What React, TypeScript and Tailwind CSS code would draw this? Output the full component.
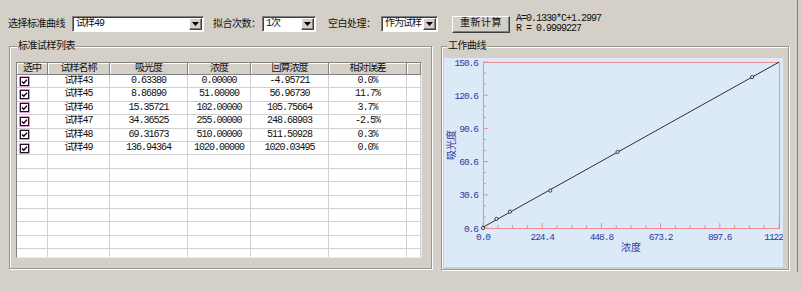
import React from 'react'

const FONT = "font-['Liberation_Mono','Noto_Sans_CJK_SC',monospace]"

type Row = { name: string; abs: string; conc: string; back: string; err: string }

const rows: Row[] = [
  { name: '试样43', abs: '0.63380', conc: '0.00000', back: '-4.95721', err: '0.0%' },
  { name: '试样45', abs: '8.86890', conc: '51.00000', back: '56.96730', err: '11.7%' },
  { name: '试样46', abs: '15.35721', conc: '102.00000', back: '105.75664', err: '3.7%' },
  { name: '试样47', abs: '34.36525', conc: '255.00000', back: '248.68903', err: '-2.5%' },
  { name: '试样48', abs: '69.31673', conc: '510.00000', back: '511.50928', err: '0.3%' },
  { name: '试样49', abs: '136.94364', conc: '1020.00000', back: '1020.03495', err: '0.0%' },
]

const points: [number, number][] = [
  [0, 0.6338],
  [51, 8.8689],
  [102, 15.35721],
  [255, 34.36525],
  [510, 69.31673],
  [1020, 136.94364],
]

function Arrow() {
  return (
    <div className="w-[13px] h-[12px] m-[1px] shrink-0 flex items-center justify-center bg-[#d4d0c8] border border-white border-r-[#404040] border-b-[#404040] shadow-[inset_-1px_-1px_0_#808080]">
      <svg width="7" height="4" viewBox="0 0 7 4">
        <path d="M0 0h7L3.5 4z" fill="#000" />
      </svg>
    </div>
  )
}

function Combo({ className, text }: { className: string; text: string }) {
  return (
    <div
      className={`${className} h-[16px] shrink-0 flex items-center bg-white border border-[#808080] border-r-white border-b-white shadow-[inset_1px_1px_0_#404040]`}
    >
      <span className="flex-1 pl-[3px] leading-[14px] whitespace-nowrap overflow-hidden tracking-[-1px]">{text}</span>
      <Arrow />
    </div>
  )
}

function Check() {
  return (
    <div className="w-[9px] h-[9px] border border-[#2a0a2a] bg-white flex items-center justify-center shadow-[0_0_0_0.5px_#b0309a]">
      <svg width="7" height="7" viewBox="0 0 7 7">
        <path d="M1 3.4L2.8 5.2L6 1.6" stroke="#000" strokeWidth="1.4" fill="none" />
      </svg>
    </div>
  )
}

const GRID = 'grid grid-cols-[31px_62px_78px_63px_78px_78px_14px]'

function SampleTable() {
  const empty = 8
  return (
    <div className="w-[406px] h-[196px] bg-white border border-[#808080] border-r-[#ececec] border-b-[#ececec] overflow-hidden text-[10px] tracking-[-1px] text-[#111]">
      <div className={`${GRID} h-[12px] bg-[#d4d0c8] border-b border-[#808080]`}>
        {['选中', '试样名称', '吸光度', '浓度', '回算浓度', '相对误差', ''].map((h, i) => (
          <div
            key={i}
            className="border-r border-[#808080] shadow-[inset_1px_1px_0_#fff] text-center leading-[11px] whitespace-nowrap overflow-hidden"
          >
            {h}
          </div>
        ))}
      </div>
      {rows.map((r) => (
        <div key={r.name} className={`${GRID} h-[13.4px]`}>
          <div className="border-r border-b border-[#d0d0d0] flex items-center pl-[3px]">
            <Check />
          </div>
          {[r.name, r.abs, r.conc, r.back, r.err, ''].map((v, i) => (
            <div
              key={i}
              className="border-r border-b border-[#d0d0d0] text-center leading-[12.4px] whitespace-nowrap overflow-hidden"
            >
              {v}
            </div>
          ))}
        </div>
      ))}
      {Array.from({ length: empty }).map((_, k) => (
        <div key={k} className={`${GRID} h-[13.4px]`}>
          {Array.from({ length: 7 }).map((__, i) => (
            <div key={i} className="border-r border-b border-[#d0d0d0]" />
          ))}
        </div>
      ))}
    </div>
  )
}

function Chart() {
  const x0 = 39
  const x1 = 335
  const y0 = 4
  const y1 = 170
  const sx = (c: number) => x0 + (c / 1122) * (x1 - x0)
  const sy = (a: number) => y1 - ((a - 0.6) / 150) * (y1 - y0)
  const blue = '#2f3aa3'
  const pink = '#ee8c94'

  const xTicks: React.ReactNode[] = []
  for (let i = 0; i <= 20; i++) {
    const x = x0 + (i * (x1 - x0)) / 20
    const major = i % 4 === 0
    xTicks.push(<line key={'x' + i} x1={x} x2={x} y1={y1} y2={y1 - (major ? 5 : 3)} stroke={pink} strokeWidth="1" />)
  }
  const yTicks: React.ReactNode[] = []
  for (let i = 0; i <= 15; i++) {
    const y = y1 - (i * (y1 - y0)) / 15
    const major = i % 3 === 0
    yTicks.push(<line key={'y' + i} x1={x0} x2={x0 + (major ? 5 : 3)} y1={y} y2={y} stroke={pink} strokeWidth="1" />)
  }

  const yLabels = ['0.6', '30.6', '60.6', '90.6', '120.6', '150.6']
  const xLabels = ['0.0', '224.4', '448.8', '673.2', '897.6', '1122']

  return (
    <svg width="339" height="209" viewBox="0 0 339 209" className="block bg-[#dce9f6]">
      <rect x={x0 + 0.5} y={y0 + 0.5} width={x1 - x0} height={y1 - y0} fill="none" stroke={pink} strokeWidth="1" />
      {xTicks}
      {yTicks}
      <line x1={sx(0)} y1={sy(1.2997)} x2={sx(1122)} y2={sy(0.133 * 1122 + 1.2997)} stroke="#000" strokeWidth="0.8" />
      {points.map(([c, a], i) => (
        <circle key={i} cx={sx(c)} cy={sy(a)} r="1.6" fill="#dce9f6" stroke="#000" strokeWidth="0.7" />
      ))}
      <g fontFamily="'Liberation Mono', monospace" fontSize="9.5" letterSpacing="-1" fill={blue}>
        {yLabels.map((l, i) => (
          <text key={l} x={x0 - 5} y={y1 - (i * (y1 - y0)) / 5 + 3.5} textAnchor="end">
            {l}
          </text>
        ))}
        {xLabels.map((l, i) =>
          i === 5 ? (
            <text key={l} x={339} y={y1 + 12} textAnchor="end">
              {l}
            </text>
          ) : (
            <text key={l} x={x0 + (i * (x1 - x0)) / 5} y={y1 + 12} textAnchor="middle">
              {l}
            </text>
          ),
        )}
      </g>
      <g fontFamily="'Noto Sans CJK SC', sans-serif" fontSize="10" fill={blue}>
        <text x={187} y={y1 + 23} textAnchor="middle">
          浓度
        </text>
        <text x={0} y={0} textAnchor="middle" transform="translate(11 87) rotate(-90)">
          吸光度
        </text>
      </g>
    </svg>
  )
}

export default function App() {
  return (
    <div className={`w-[802px] h-[291px] bg-[#d4d0c8] overflow-hidden text-[10px] text-[#111] ${FONT}`}>
      <div className="w-[798px] h-[272px] border-r border-[#808080] flex flex-col">
        <div className="flex items-center h-[22px] mt-[13px] pl-[8px] tracking-[-0.5px]">
          <span className="w-[57px] shrink-0 whitespace-nowrap">选择标准曲线</span>
          <div className="ml-[7px]">
            <Combo className="w-[132px]" text="试样49" />
          </div>
          <span className="ml-[9px] w-[45px] shrink-0 whitespace-nowrap">拟合次数：</span>
          <div className="ml-[4px]">
            <Combo className="w-[54px]" text="1次" />
          </div>
          <span className="ml-[12px] w-[49px] shrink-0 whitespace-nowrap">空白处理：</span>
          <div className="ml-[4px]">
            <Combo className="w-[57px]" text="作为试样" />
          </div>
          <button className="ml-[14px] w-[58px] h-[17px] shrink-0 bg-[#d4d0c8] border border-white border-r-[#404040] border-b-[#404040] shadow-[inset_-1px_-1px_0_#808080] leading-[14px] tracking-[0.5px]">
            重新计算
          </button>
          <div className="ml-[6px] flex flex-col leading-[9.5px] tracking-[-1px] mb-[1px]">
            <span>A=0.1330*C+1.2997</span>
            <span>R = 0.9999227</span>
          </div>
        </div>

        <div className="flex mt-[11px] pl-[9px] gap-[9px]">
          <div className="relative w-[423px] h-[223px] border border-[#9a968e] shadow-[1px_1px_0_#fff,inset_1px_1px_0_#fff] pl-[6px] pt-[15px]">
            <span className="absolute -top-[7px] left-[7px] px-[1px] bg-[#d4d0c8] leading-[13px] tracking-[-0.5px]">
              标准试样列表
            </span>
            <SampleTable />
          </div>
          <div className="relative w-[348px] h-[224px] border border-[#9a968e] shadow-[1px_1px_0_#fff,inset_1px_1px_0_#fff] pl-[2px] pt-[11px]">
            <span className="absolute -top-[7px] left-[5px] px-[1px] bg-[#d4d0c8] leading-[13px] tracking-[-0.5px]">
              工作曲线
            </span>
            <Chart />
          </div>
        </div>
      </div>
    </div>
  )
}
